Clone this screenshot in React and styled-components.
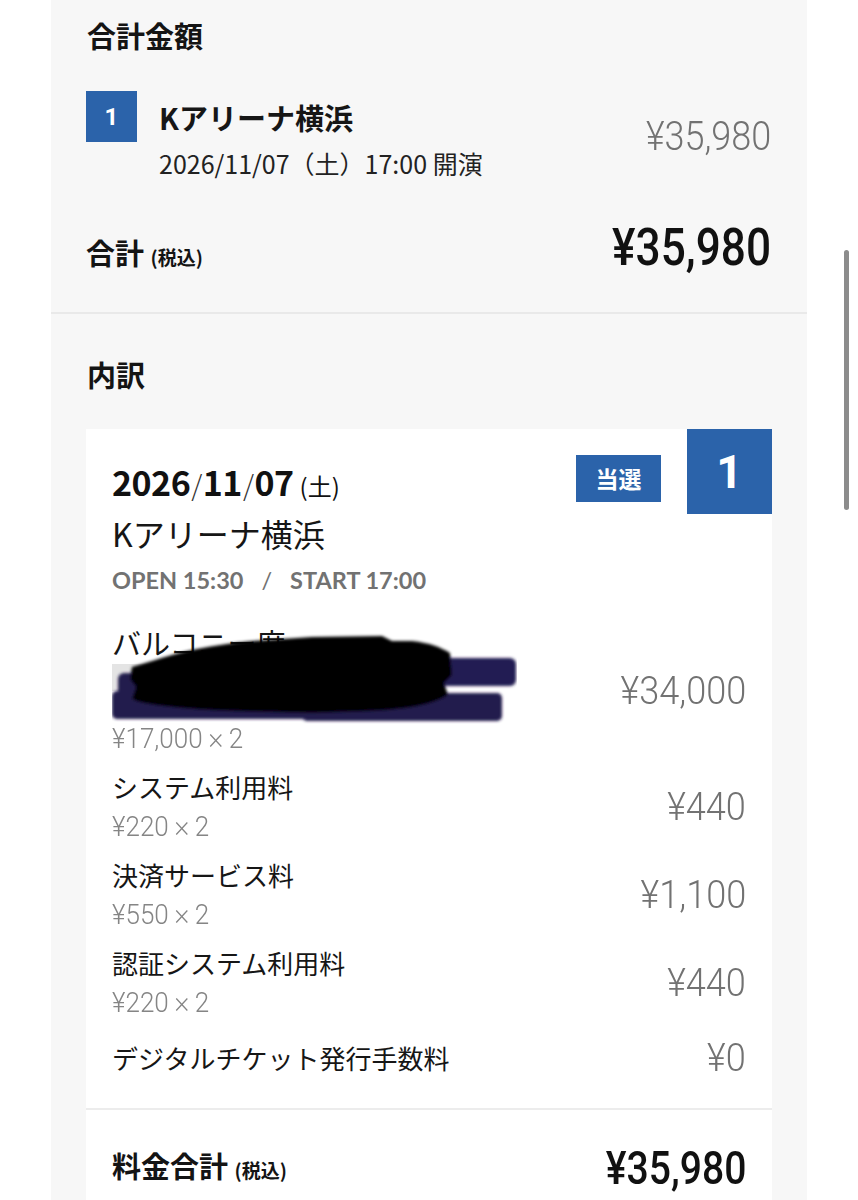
import styled, { createGlobalStyle } from "styled-components";

const JP = `"Noto Sans CJK JP", "Noto Sans", sans-serif`;
const NUM = `"Roboto", "Noto Sans CJK JP", sans-serif`;
const BLUE = "#2b63aa";

const GlobalStyle = createGlobalStyle`
  html, body { margin: 0; padding: 0; background: #fff; }
  body { font-family: ${JP}; color: #161616; }
`;

const fees = [
  { label: "システム利用料", unit: "¥220", qty: 2, amount: "¥440" },
  { label: "決済サービス料", unit: "¥550", qty: 2, amount: "¥1,100" },
  { label: "認証システム利用料", unit: "¥220", qty: 2, amount: "¥440" },
];

function Redaction() {
  return (
    <Scribble width="405" height="95" viewBox="0 0 405 95">
      <defs>
        <filter id="soft" x="-5%" y="-20%" width="110%" height="140%">
          <feGaussianBlur stdDeviation="1.4" />
        </filter>
      </defs>
      <rect x="0" y="33" width="190" height="27" fill="#e4e4e4" />
      <g filter="url(#soft)">
        <rect x="6" y="42" width="250" height="40" rx="6" fill="#221a4d" />
        <rect x="0" y="60" width="230" height="28" rx="5" fill="#221a4d" />
        <rect x="180" y="27" width="224" height="28" rx="6" fill="#241c52" />
        <rect x="190" y="62" width="200" height="28" rx="5" fill="#221a4d" />
        <path
          d="M 20 36 L 40 30 C 70 20, 100 14, 140 10 L 200 6 L 270 5 L 280 10 L 300 10 C 318 12, 328 16, 338 22 L 340 44 L 332 52 L 336 64 C 320 74, 296 78, 260 80 L 200 82 L 120 80 C 70 78, 30 74, 20 68 L 24 56 L 18 48 Z"
          fill="#040404"
        />
        <path d="M 25 46 L 120 40 L 200 44 L 330 40 L 330 60 L 200 66 L 30 66 Z" fill="#000" />
      </g>
    </Scribble>
  );
}

export default function App() {
  return (
    <Page>
      <GlobalStyle />
      <Panel>
        <Summary>
          <SectionTitle>合計金額</SectionTitle>
          <EventRow>
            <NumBadge>1</NumBadge>
            <EventInfo>
              <EventName>Kアリーナ横浜</EventName>
              <EventDate>2026/11/07（土）17:00 開演</EventDate>
            </EventInfo>
            <SubAmount $size={40} $scale={0.9}>
              ¥35,980
            </SubAmount>
          </EventRow>
          <TotalRow>
            <TotalLabel>
              合計 <small>(税込)</small>
            </TotalLabel>
            <TotalAmount $size={52} $lh={56}>
              ¥35,980
            </TotalAmount>
          </TotalRow>
        </Summary>

        <Breakdown>
          <SectionTitle>内訳</SectionTitle>
          <Card>
            <Badges>
              <ResultTag>当選</ResultTag>
              <CornerBadge>1</CornerBadge>
            </Badges>
            <CardBody>
              <DateLine>
                2026<Slash>/</Slash>11<Slash>/</Slash>07<Weekday>(土)</Weekday>
              </DateLine>
              <Venue>Kアリーナ横浜</Venue>
              <Times>
                OPEN 15:30<Sep>/</Sep>START 17:00
              </Times>

              <Items>
                <Item>
                  <div>
                    <SeatLabel>バルコニー席</SeatLabel>
                    <HiddenLine />
                    <Unit>
                      ¥17,000<Mult>×</Mult>2
                    </Unit>
                  </div>
                  <SubAmount $size={38} $scale={0.95}>
                    ¥34,000
                  </SubAmount>
                  <Redaction />
                </Item>
                {fees.map((f) => (
                  <Item key={f.label}>
                    <div>
                      <Label>{f.label}</Label>
                      <Unit>
                        {f.unit}
                        <Mult>×</Mult>
                        {f.qty}
                      </Unit>
                    </div>
                    <SubAmount $size={38} $scale={0.95}>
                      {f.amount}
                    </SubAmount>
                  </Item>
                ))}
                <Item $single>
                  <Label>デジタルチケット発行手数料</Label>
                  <SubAmount $size={38} $scale={0.95}>
                    ¥0
                  </SubAmount>
                </Item>
              </Items>
            </CardBody>
            <CardFooter>
              <TotalLabel>
                料金合計 <small>(税込)</small>
              </TotalLabel>
              <TotalAmount $size={46} $lh={40}>
                ¥35,980
              </TotalAmount>
            </CardFooter>
          </Card>
        </Breakdown>
      </Panel>
      <ScrollThumb />
    </Page>
  );
}

const Page = styled.div`
  position: relative;
  width: 858px;
  height: 1200px;
  overflow: hidden;
  background: #fff;
`;

const Panel = styled.main`
  margin-left: 51px;
  width: 756px;
  min-height: 1200px;
  background: #f7f7f7;
`;

const Summary = styled.section`
  padding: 15px 36px 35px 35px;
  border-bottom: 2px solid #e9e9e9;
`;

const SectionTitle = styled.h2`
  margin: 0;
  padding-left: 1px;
  font: 700 29px/40px ${JP};
  color: #141414;
`;

const EventRow = styled.div`
  display: flex;
  align-items: flex-start;
  margin-top: 36px;
`;

const NumBadge = styled.div`
  flex: none;
  width: 51px;
  height: 51px;
  display: flex;
  align-items: center;
  justify-content: center;
  background: ${BLUE};
  color: #fff;
  font: 700 24px/1 ${NUM};
`;

const EventInfo = styled.div`
  flex: 1;
  margin-left: 22px;
  padding-top: 6px;
`;

const EventName = styled.div`
  font: 700 29px/40px ${JP};
`;

const EventDate = styled.div`
  margin-top: 6px;
  font: 400 25px/40px ${JP};
  color: #222;
`;

const SubAmount = styled.div`
  align-self: center;
  font: 300 ${(p) => p.$size}px/1 ${NUM};
  color: #727272;
  white-space: nowrap;
  transform: scaleX(${(p) => p.$scale});
  transform-origin: right center;
`;

const TotalRow = styled.div`
  display: flex;
  justify-content: space-between;
  align-items: baseline;
  margin-top: 37px;
  line-height: 56px;
`;

const TotalLabel = styled.div`
  font: 700 29px/40px ${JP};
  color: #141414;

  small {
    font-size: 19px;
    font-weight: 700;
  }
`;

const TotalAmount = styled.div`
  font: 500 ${(p) => p.$size}px / ${(p) => p.$lh}px ${NUM};
  color: #111;
  white-space: nowrap;
  transform: scaleX(0.85);
  transform-origin: right center;
`;

const Breakdown = styled.section`
  padding: 40px 35px 0;
`;

const Card = styled.div`
  position: relative;
  margin-top: 35px;
  background: #fff;
`;

const Badges = styled.div`
  position: absolute;
  top: 0;
  right: 0;
  display: flex;
  align-items: flex-start;
  gap: 26px;
`;

const ResultTag = styled.div`
  margin-top: 26px;
  width: 85px;
  height: 47px;
  display: flex;
  align-items: center;
  justify-content: center;
  background: ${BLUE};
  color: #fff;
  font: 700 23px/1 ${JP};
`;

const CornerBadge = styled.div`
  width: 85px;
  height: 85px;
  display: flex;
  align-items: center;
  justify-content: center;
  background: ${BLUE};
  color: #fff;
  font: 700 46px/1 ${NUM};
`;

const CardBody = styled.div`
  padding: 33px 26px 30px;
  border-bottom: 2px solid #ececec;
`;

const DateLine = styled.div`
  font: 700 34px/40px ${JP};
  letter-spacing: -0.5px;
  color: #111;
`;

const Slash = styled.span`
  font-weight: 300;
  font-size: 28px;
  margin: 0 1px;
  color: #333;
`;

const Weekday = styled.span`
  margin-left: 6px;
  font-weight: 400;
  font-size: 24px;
  letter-spacing: 0;
`;

const Venue = styled.div`
  margin-top: 3px;
  font: 400 32px/48px ${JP};
  color: #161616;
`;

const Times = styled.div`
  margin-top: 3px;
  font: 700 23.5px/40px "Lato", "Noto Sans", sans-serif;
  color: #727272;
`;

const Sep = styled.span`
  margin: 0 18px;
  font-weight: 400;
`;

const Items = styled.div`
  display: flex;
  flex-direction: column;
  gap: 8px;
  margin-top: 22px;
`;

const Item = styled.div`
  position: relative;
  display: flex;
  justify-content: space-between;
  align-items: center;
  margin-top: ${(p) => (p.$single ? "7px" : "0")};
`;

const Label = styled.div`
  font: 400 26px/40px ${JP};
  color: #161616;
`;

const SeatLabel = styled(Label)`
  font-size: 29px;
`;

const HiddenLine = styled.div`
  height: 57px;
`;

const Unit = styled.div`
  font: 300 28px/40px ${NUM};
  color: #858585;
  transform: scaleX(0.93);
  transform-origin: left center;
`;

const Mult = styled.span`
  margin: 0 4px;
  font: 400 20px ${JP};
`;

const Scribble = styled.svg`
  position: absolute;
  left: 0;
  top: 9px;
`;

const CardFooter = styled.div`
  display: flex;
  justify-content: space-between;
  align-items: center;
  padding: 35px 26px 40px;
`;

const ScrollThumb = styled.div`
  position: absolute;
  left: 844px;
  top: 250px;
  width: 5px;
  height: 260px;
  border-radius: 3px;
  background: #8c8c8c;
`;
